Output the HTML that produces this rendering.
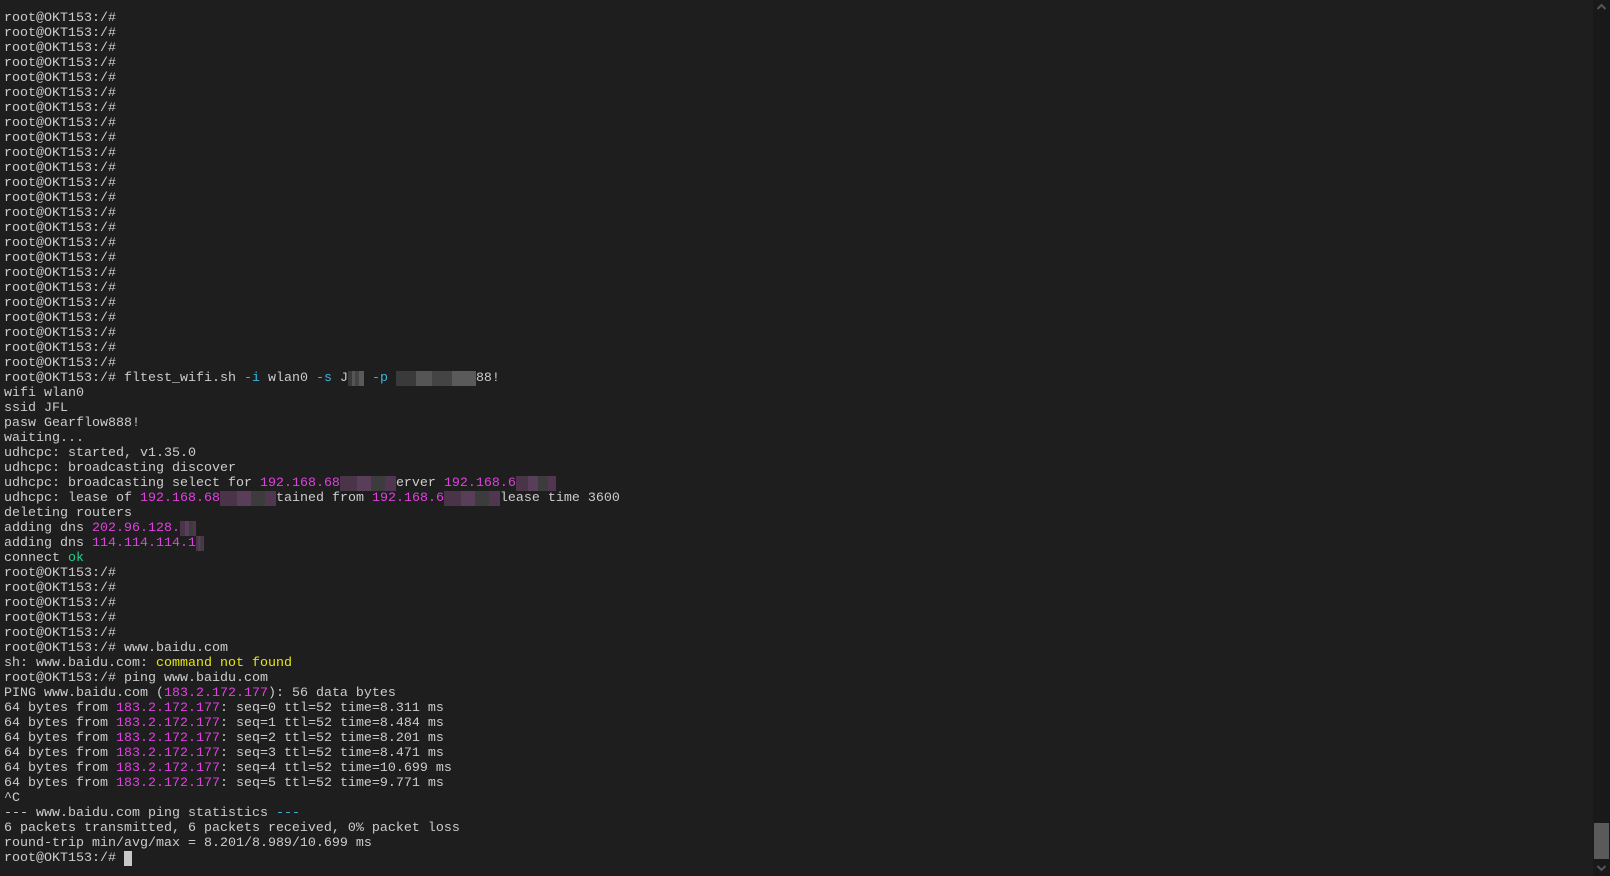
<!DOCTYPE html>
<html><head><meta charset="utf-8"><style>
html,body{margin:0;padding:0;background:#1e1e1e;width:1610px;height:876px;overflow:hidden}
pre{margin:0;position:absolute;left:4px;top:11px;font-family:"Liberation Mono",monospace;font-size:13.33px;line-height:15px;color:#cccccc}
.m{color:#e040e0}.c{color:#3bb4db}.g{color:#23d18b}.y{color:#e5e510}
.b{background:linear-gradient(90deg,#4a3448 0 30%,#5a3d58 30% 55%,#3c3c3c 55% 80%,#503650 80%)}
.b2{background:linear-gradient(90deg,#3a3a3a 0 25%,#555 25% 45%,#444 45% 70%,#5a5a5a 70%)}
.cur{background:#c8c8c8}
#sb{position:absolute;right:0;top:0;width:17px;height:876px;background:#191919}
#th{position:absolute;right:1px;top:823px;width:15px;height:36px;background:#5a5a5a}
</style></head><body>
<pre>root@OKT153:/#
root@OKT153:/#
root@OKT153:/#
root@OKT153:/#
root@OKT153:/#
root@OKT153:/#
root@OKT153:/#
root@OKT153:/#
root@OKT153:/#
root@OKT153:/#
root@OKT153:/#
root@OKT153:/#
root@OKT153:/#
root@OKT153:/#
root@OKT153:/#
root@OKT153:/#
root@OKT153:/#
root@OKT153:/#
root@OKT153:/#
root@OKT153:/#
root@OKT153:/#
root@OKT153:/#
root@OKT153:/#
root@OKT153:/#
root@OKT153:/# fltest_wifi.sh <span class="c">-i</span> wlan0 <span class="c">-s</span> J<span class="b2">  </span> <span class="c">-p</span> <span class="b2">          </span>88!
wifi wlan0
ssid JFL
pasw Gearflow888!
waiting...
udhcpc: started, v1.35.0
udhcpc: broadcasting discover
udhcpc: broadcasting select for <span class="m">192.168.68</span><span class="b">       </span>erver <span class="m">192.168.6</span><span class="b">     </span>
udhcpc: lease of <span class="m">192.168.68</span><span class="b">       </span>tained from <span class="m">192.168.6</span><span class="b">       </span>lease time 3600
deleting routers
adding dns <span class="m">202.96.128.</span><span class="b">  </span>
adding dns <span class="m">114.114.114.1</span><span class="b"> </span>
connect <span class="g">ok</span>
root@OKT153:/#
root@OKT153:/#
root@OKT153:/#
root@OKT153:/#
root@OKT153:/#
root@OKT153:/# www.baidu.com
sh: www.baidu.com: <span class="y">command not found</span>
root@OKT153:/# ping www.baidu.com
PING www.baidu.com (<span class="m">183.2.172.177</span>): 56 data bytes
64 bytes from <span class="m">183.2.172.177</span>: seq=0 ttl=52 time=8.311 ms
64 bytes from <span class="m">183.2.172.177</span>: seq=1 ttl=52 time=8.484 ms
64 bytes from <span class="m">183.2.172.177</span>: seq=2 ttl=52 time=8.201 ms
64 bytes from <span class="m">183.2.172.177</span>: seq=3 ttl=52 time=8.471 ms
64 bytes from <span class="m">183.2.172.177</span>: seq=4 ttl=52 time=10.699 ms
64 bytes from <span class="m">183.2.172.177</span>: seq=5 ttl=52 time=9.771 ms
^C
--- www.baidu.com ping statistics <span class="c">---</span>
6 packets transmitted, 6 packets received, 0% packet loss
round-trip min/avg/max = 8.201/8.989/10.699 ms
root@OKT153:/# <span class="cur"> </span></pre>
<div id="sb"><div id="th"></div>
<svg style="position:absolute;left:3px;top:3px" width="11" height="8"><path d="M1.5 6L5.5 2L9.5 6" stroke="#555" stroke-width="2" fill="none"/></svg>
<svg style="position:absolute;left:3px;top:864px" width="11" height="8"><path d="M1.5 2L5.5 6L9.5 2" stroke="#555" stroke-width="2" fill="none"/></svg>
</div>
</body></html>
